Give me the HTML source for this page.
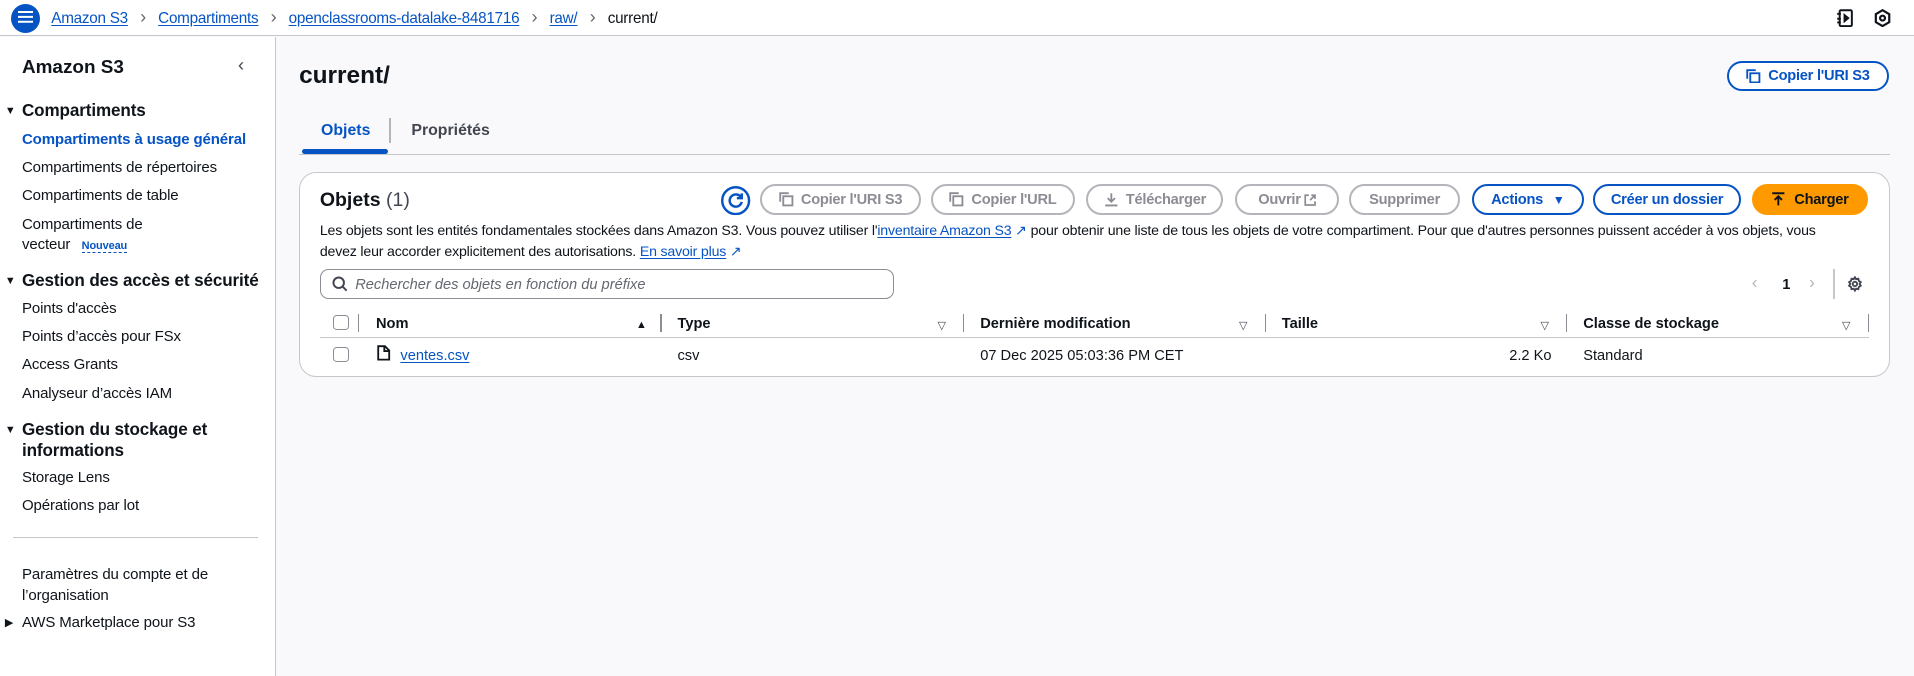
<!DOCTYPE html>
<html><head><meta charset="utf-8"><style>
html,body{margin:0;padding:0;overflow:hidden}
body{width:1914px;height:676px;background:#fff;font-family:"Liberation Sans",sans-serif;color:#0f141a}
#w{position:absolute;left:0;top:0;width:1568px;height:554px;zoom:1.2207;background:#f9f9fb}
.a{position:absolute;white-space:nowrap}
.lnk{color:#0654c4;text-decoration:underline;text-underline-offset:2px}
.top{position:absolute;left:0;top:0;width:1568px;height:29px;background:#fff;border-bottom:1px solid #c6c6cd}
.side{position:absolute;left:0;top:30px;width:225px;height:524px;background:#fff;border-right:1px solid #c6c6cd}
.nav{font-size:12.3px;color:#0f141a;letter-spacing:-0.1px}
.h{font-size:14px;font-weight:bold;letter-spacing:-0.1px}
.btn{position:absolute;top:151px;height:22px;border:2px solid #b4b4bb;border-radius:14px;color:#8c8c94;font-size:12px;font-weight:bold;display:flex;align-items:center;justify-content:center;box-sizing:content-box;background:#fff;letter-spacing:-0.2px}
.bb{border-color:#0654c4;color:#0654c4}
.th{font-size:12px;font-weight:bold;top:259px}
.dv{position:absolute;top:257px;width:1px;height:15px;background:#8c8c94}
.tri{font-size:9px;color:#424650}
.cb{position:absolute;width:11px;height:11px;border:1px solid #8c8c94;border-radius:3px;background:#fff}
.td{font-size:12px;top:285px}
.ch{color:#656871;margin:0 10px;font-size:15px;line-height:10px}
</style></head><body><div id="w">
<div class="top"></div>
<div class="a" style="left:9px;top:3px;width:24px;height:24px;border-radius:12px;background:#0654c4"></div>
<div class="a" style="left:15px;top:9px;width:12px;height:2px;background:#fff;box-shadow:0 4px 0 #fff,0 8px 0 #fff"></div>
<div class="a" style="left:42px;top:8px;font-size:12.5px;letter-spacing:-0.2px">
<span class="lnk">Amazon S3</span><span class="ch">&#x203A;</span><span class="lnk">Compartiments</span><span class="ch">&#x203A;</span><span class="lnk">openclassrooms-datalake-8481716</span><span class="ch">&#x203A;</span><span class="lnk">raw/</span><span class="ch">&#x203A;</span><span>current/</span></div>
<svg class="a" style="left:1504px;top:7px" width="14" height="15" viewBox="0 0 14 15" fill="none" stroke="#0f141a" stroke-width="1.6"><rect x="3" y="1" width="10" height="13" rx="1"/><path d="M1 4h3M1 8h3M1 11h3"/><path d="M7 5l3 2.5L7 10z" fill="#0f141a"/></svg>
<svg class="a" style="left:1535px;top:7px" width="14" height="15" viewBox="0 0 14 15" fill="none" stroke="#0f141a" stroke-width="1.8"><path d="M7 1l5.5 3.2v6.6L7 14l-5.5-3.2V4.2z"/><circle cx="7" cy="7.5" r="2"/></svg>

<div class="side"></div>
<div class="a" style="left:18px;top:47px;font-size:15.5px;font-weight:bold">Amazon S3</div>
<div class="a" style="left:195px;top:44px;font-size:15px;color:#424650">&#x2039;</div>
<div class="a" style="left:4px;top:86px;font-size:9px">&#9660;</div>
<div class="a h" style="left:18px;top:83px">Compartiments</div>
<div class="a nav" style="left:18px;top:107px;color:#0654c4;font-weight:bold">Compartiments à usage général</div>
<div class="a nav" style="left:18px;top:130px">Compartiments de répertoires</div>
<div class="a nav" style="left:18px;top:153px">Compartiments de table</div>
<div class="a nav" style="left:18px;top:177px">Compartiments de</div>
<div class="a nav" style="left:18px;top:193px">vecteur <span style="margin-left:6px;font-size:9px;font-weight:bold;color:#0654c4;border-bottom:1px dashed #0654c4">Nouveau</span></div>
<div class="a" style="left:4px;top:225px;font-size:9px">&#9660;</div>
<div class="a h" style="left:18px;top:222px">Gestion des accès et sécurité</div>
<div class="a nav" style="left:18px;top:246px">Points d'accès</div>
<div class="a nav" style="left:18px;top:269px">Points d’accès pour FSx</div>
<div class="a nav" style="left:18px;top:292px">Access Grants</div>
<div class="a nav" style="left:18px;top:315px">Analyseur d’accès IAM</div>
<div class="a" style="left:4px;top:347px;font-size:9px">&#9660;</div>
<div class="a h" style="left:18px;top:344px">Gestion du stockage et</div>
<div class="a h" style="left:18px;top:361px">informations</div>
<div class="a nav" style="left:18px;top:384px">Storage Lens</div>
<div class="a nav" style="left:18px;top:407px">Opérations par lot</div>
<div class="a" style="left:11px;top:440px;width:200px;height:1px;background:#c6c6cd"></div>
<div class="a nav" style="left:18px;top:464px">Paramètres du compte et de</div>
<div class="a nav" style="left:18px;top:481px">l’organisation</div>
<div class="a" style="left:4px;top:505px;font-size:9px">&#9654;</div>
<div class="a nav" style="left:18px;top:503px">AWS Marketplace pour S3</div>

<div class="a" style="left:245px;top:51px;font-size:20px;font-weight:bold">current/</div>
<div class="btn bb" style="left:1415px;top:50px;width:129px;height:21px"><svg width="12" height="12" viewBox="0 0 12 12" fill="none" stroke="#0654c4" stroke-width="1.5" style="margin-right:6px"><rect x="3.5" y="3.5" width="7.5" height="7.5"/><path d="M1 8V1h7"/></svg>Copier l'URI S3</div>
<div class="a" style="left:263px;top:100px;font-size:13px;font-weight:bold;color:#0654c4">Objets</div>
<div class="a" style="left:247px;top:122px;width:71px;height:4px;border-radius:2px;background:#0654c4"></div>
<div class="a" style="left:319px;top:97px;width:1px;height:20px;background:#b4b4bb"></div>
<div class="a" style="left:337px;top:100px;font-size:13px;font-weight:bold;color:#424650">Propriétés</div>
<div class="a" style="left:245px;top:126px;width:1303px;height:1px;background:#c6c6cd"></div>

<div class="a" style="left:245px;top:141px;width:1302px;height:166px;background:#fff;border:1px solid #c6c6cd;border-radius:14px"></div>
<div class="a" style="left:262px;top:155px;font-size:16px;font-weight:bold">Objets <span style="font-weight:normal;color:#424650">(1)</span></div>
<svg class="a" style="left:591px;top:152px" width="24" height="24" viewBox="0 0 24 24" fill="none" stroke="#0654c4" stroke-width="2"><circle cx="12" cy="12" r="11"/><path d="M16.5 9.5A5 5 0 1 0 17 13"/><path d="M17 6v4h-4"/></svg>
<div class="btn" style="left:623px;width:128px"><svg width="12" height="12" viewBox="0 0 12 12" fill="none" stroke="#8c8c94" stroke-width="1.5" style="margin-right:6px"><rect x="3.5" y="3.5" width="7.5" height="7.5"/><path d="M1 8V1h7"/></svg>Copier l'URI S3</div>
<div class="btn" style="left:763px;width:114px"><svg width="12" height="12" viewBox="0 0 12 12" fill="none" stroke="#8c8c94" stroke-width="1.5" style="margin-right:6px"><rect x="3.5" y="3.5" width="7.5" height="7.5"/><path d="M1 8V1h7"/></svg>Copier l'URL</div>
<div class="btn" style="left:890px;width:109px"><svg width="12" height="12" viewBox="0 0 12 12" fill="none" stroke="#8c8c94" stroke-width="1.5" style="margin-right:6px"><path d="M6 1v7M3 5l3 3 3-3M1 11h10"/></svg>Télécharger</div>
<div class="btn" style="left:1012px;width:82px">Ouvrir <svg width="10" height="10" viewBox="0 0 10 10" fill="none" stroke="#8c8c94" stroke-width="1.4" style="margin-left:3px"><path d="M4 1H1v8h8V6M6 1h3v3M9 1L5 5"/></svg></div>
<div class="btn" style="left:1105px;width:88px">Supprimer</div>
<div class="btn bb" style="left:1206px;width:88px">Actions <span style="font-size:10px;margin-left:8px">&#9660;</span></div>
<div class="btn bb" style="left:1305px;width:118px">Créer un dossier</div>
<div class="btn" style="left:1435px;width:92px;border-color:#ff9900;background:#ff9900;color:#0f141a;height:22px"><svg width="12" height="12" viewBox="0 0 12 12" fill="none" stroke="#0f141a" stroke-width="1.6" style="margin-right:7px"><path d="M1 1h10M6 3.5V11M3 6.5l3-3 3 3"/></svg>Charger</div>
<div class="a" style="left:262px;top:181px;font-size:11.6px;line-height:17px;letter-spacing:-0.15px;color:#0f141a">Les objets sont les entités fondamentales stockées dans Amazon S3. Vous pouvez utiliser l'<span class="lnk">inventaire Amazon S3</span> <span style="color:#0654c4">&#x2197;</span> pour obtenir une liste de tous les objets de votre compartiment. Pour que d'autres personnes puissent accéder à vos objets, vous<br>devez leur accorder explicitement des autorisations. <span class="lnk">En savoir plus</span> <span style="color:#0654c4">&#x2197;</span></div>
<div class="a" style="left:262px;top:220px;width:469px;height:23px;border:1px solid #8c8c94;border-radius:7px;background:#fff"></div>
<svg class="a" style="left:272px;top:226px" width="13" height="13" viewBox="0 0 13 13" fill="none" stroke="#424650" stroke-width="1.6"><circle cx="5.5" cy="5.5" r="4.3"/><path d="M8.7 8.7L12 12"/></svg>
<div class="a" style="left:291px;top:227px;font-size:12px;font-style:italic;color:#656871">Rechercher des objets en fonction du préfixe</div>
<div class="a" style="left:1435px;top:224px;font-size:14px;color:#b4b4bb">&#x2039;</div>
<div class="a" style="left:1460px;top:227px;font-size:12px;font-weight:bold">1</div>
<div class="a" style="left:1482px;top:224px;font-size:14px;color:#b4b4bb">&#x203A;</div>
<div class="a" style="left:1502px;top:220px;width:1px;height:25px;background:#c6c6cd"></div>
<svg class="a" style="left:1513px;top:226px" width="13" height="13" viewBox="0 0 13 13" fill="none" stroke="#424650" stroke-width="1.5"><path d="M6.5 1l1 1.6 1.8-.4.4 1.8 1.6 1-1 1.5 1 1.5-1.6 1-.4 1.8-1.8-.4-1 1.6-1-1.6-1.8.4-.4-1.8-1.6-1 1-1.5-1-1.5 1.6-1 .4-1.8 1.8.4z"/><circle cx="6.5" cy="6.5" r="1.8"/></svg>

<div class="cb" style="left:273px;top:258px"></div>
<div class="dv" style="left:293px"></div>
<div class="a th" style="left:308px">Nom</div><div class="a tri" style="left:521px;top:261px;color:#0f141a">&#9650;</div><div class="dv" style="left:541px"></div>
<div class="a th" style="left:555px">Type</div><div class="a tri" style="left:768px;top:261px">&#9661;</div><div class="dv" style="left:789px"></div>
<div class="a th" style="left:803px">Dernière modification</div><div class="a tri" style="left:1015px;top:261px">&#9661;</div><div class="dv" style="left:1036px"></div>
<div class="a th" style="left:1050px">Taille</div><div class="a tri" style="left:1262px;top:261px">&#9661;</div><div class="dv" style="left:1283px"></div>
<div class="a th" style="left:1297px">Classe de stockage</div><div class="a tri" style="left:1509px;top:261px">&#9661;</div><div class="dv" style="left:1530px"></div>
<div class="a" style="left:262px;top:276px;width:1269px;height:1px;background:#c6c6cd"></div>
<div class="cb" style="left:273px;top:284px"></div>
<svg class="a" style="left:309px;top:283px" width="11" height="13" viewBox="0 0 11 13" fill="none" stroke="#0f141a" stroke-width="1.5"><path d="M1 1h5.5L10 4.5V12H1z"/><path d="M6 1v4h4"/></svg>
<div class="a td lnk" style="left:328px">ventes.csv</div>
<div class="a td" style="left:555px">csv</div>
<div class="a td" style="left:803px">07 Dec 2025 05:03:36 PM CET</div>
<div class="a td" style="left:1200px;width:71px;text-align:right">2.2 Ko</div>
<div class="a td" style="left:1297px">Standard</div>
</div></body></html>
